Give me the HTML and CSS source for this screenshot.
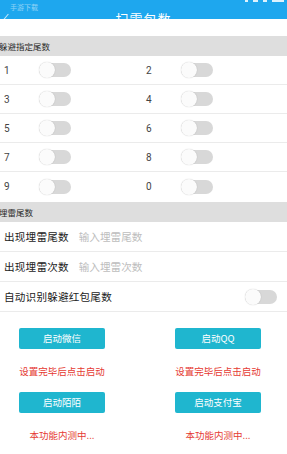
FILE: index.html
```html
<!DOCTYPE html>
<html>
<head>
<meta charset="utf-8">
<link rel="stylesheet" href="styles.css">
</head>
<body>
<div class="app">
  <header class="topbar">
    <span class="brand">手游下载</span>
    <span class="back"></span>
    <span class="title">扫雷包数</span>
    <div class="status">
      <span class="st1"></span><span class="st2"></span><span class="st3"></span><span class="st4"></span>
    </div>
  </header>
  <div class="gap"></div>
  <div class="section">躲避指定尾数</div>
  <div class="grid">
    <div class="row">
      <div class="cell"><span class="num">1</span><span class="toggle"></span></div>
      <div class="cell"><span class="num">2</span><span class="toggle"></span></div>
    </div>
    <div class="row">
      <div class="cell"><span class="num">3</span><span class="toggle"></span></div>
      <div class="cell"><span class="num">4</span><span class="toggle"></span></div>
    </div>
    <div class="row">
      <div class="cell"><span class="num">5</span><span class="toggle"></span></div>
      <div class="cell"><span class="num">6</span><span class="toggle"></span></div>
    </div>
    <div class="row">
      <div class="cell"><span class="num">7</span><span class="toggle"></span></div>
      <div class="cell"><span class="num">8</span><span class="toggle"></span></div>
    </div>
    <div class="row last">
      <div class="cell"><span class="num">9</span><span class="toggle"></span></div>
      <div class="cell"><span class="num">0</span><span class="toggle"></span></div>
    </div>
  </div>
  <div class="section section-mine">埋雷尾数</div>
  <div class="field"><span class="flabel">出现埋雷尾数</span><span class="ph">输入埋雷尾数</span></div>
  <div class="field"><span class="flabel">出现埋雷次数</span><span class="ph">输入埋雷次数</span></div>
  <div class="field field-switch"><span class="flabel">自动识别躲避红包尾数</span><span class="toggle"></span></div>
  <div class="actions">
    <div class="act"><button class="btn">启动微信</button><span class="note">设置完毕后点击启动</span></div>
    <div class="act"><button class="btn">启动QQ</button><span class="note">设置完毕后点击启动</span></div>
    <div class="act"><button class="btn">启动陌陌</button><span class="note">本功能内测中...</span></div>
    <div class="act"><button class="btn">启动支付宝</button><span class="note">本功能内测中...</span></div>
  </div>
</div>
</body>
</html>
```
FILE: styles.css
```css
* { box-sizing: border-box; margin: 0; padding: 0; }
html, body { width: 287px; height: 454px; overflow: hidden; background: #fff; }
body { font-family: "Noto Sans CJK SC", "Noto Sans", sans-serif; color: #333; }
.app { width: 287px; }

.topbar {
  position: relative;
  height: 19px;
  background: #1ea7ee;
  overflow: hidden;
}
.brand {
  position: absolute;
  left: 10px; top: 3px;
  font-size: 7px;
  line-height: 9px;
  color: rgba(255,255,255,0.5);
}
.back {
  position: absolute;
  left: 5px; top: 13px;
  width: 1px; height: 9px;
  background: rgba(255,255,255,0.75);
  transform: rotate(40deg);
}
.title {
  position: absolute;
  left: 0; right: 0; top: 11px;
  text-align: center;
  font-size: 13px;
  line-height: 16px;
  color: #fff;
  letter-spacing: 1px;
}
.status { position: absolute; right: 3px; top: 0; display: flex; gap: 5px; }
.status span { display: block; height: 2px; background: rgba(255,255,255,0.85); }
.st1 { width: 3px; } .st2 { width: 5px; } .st3 { width: 4px; } .st4 { width: 12px; }

.gap { height: 17px; background: #fff; }
.section {
  height: 20px;
  background: #dedede;
  font-size: 8.5px;
  line-height: 20px;
  text-indent: -1px;
  color: #2b2b2b;
}
.section-mine { margin-top: 1px; }

.row {
  display: grid;
  grid-template-columns: 142px 145px;
  height: 29px;
  border-bottom: 1px solid #ebebeb;
}
.row.last { border-bottom: none; }
.cell { display: flex; align-items: center; padding-left: 4px; }
.num {
  width: 35px;
  font-family: Roboto, "Noto Sans", sans-serif;
  font-size: 10px;
  color: #444;
}

.toggle {
  position: relative;
  display: block;
  width: 32px;
  height: 14px;
  border-radius: 7px;
  background: #d8d8d8;
}
.toggle::before {
  content: "";
  position: absolute;
  left: 0; top: -1px;
  width: 16px; height: 16px;
  border-radius: 50%;
  background: #fbfbfb;
  box-shadow: 0 0 1px rgba(0,0,0,0.25);
}

.field {
  display: flex;
  align-items: center;
  height: 30px;
  padding-left: 4px;
  border-bottom: 1px solid #ebebeb;
}
.flabel { font-size: 10.6px; color: #222; letter-spacing: 0.2px; }
.ph { margin-left: 10px; font-size: 10.6px; color: #bdbdbd; }
.field-switch { justify-content: space-between; padding-right: 10px; }

.actions {
  display: grid;
  grid-template-columns: 86px 86px;
  justify-content: space-between;
  padding: 16px 26px 0 19px;
  row-gap: 15px;
}
.act { display: flex; flex-direction: column; align-items: center; }
.btn {
  width: 86px;
  height: 21px;
  border: none;
  border-radius: 2px;
  background: #1fb6cf;
  color: #fff;
  font-family: "Noto Sans CJK SC", sans-serif;
  font-size: 9.5px;
  line-height: 21px;
}
.note {
  margin-top: 16px;
  font-size: 9.5px;
  line-height: 12px;
  color: #e53a32;
  white-space: nowrap;
}
```
